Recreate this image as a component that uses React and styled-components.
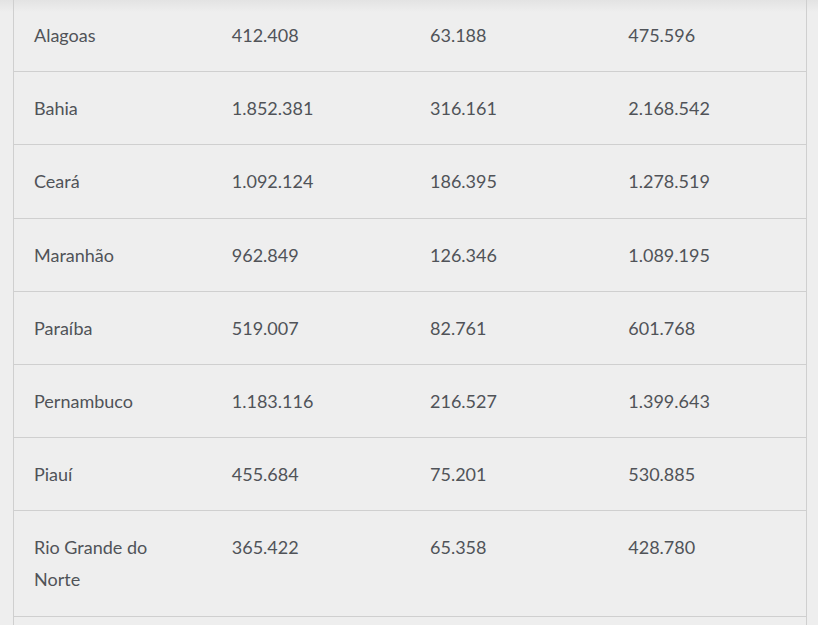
import React from 'react';
import styled, { createGlobalStyle } from 'styled-components';

const GlobalStyle = createGlobalStyle`
  body {
    margin: 0;
    background: linear-gradient(to bottom, #e3e3e3 0, #eeeeee 12px, #eeeeee 100%);
    font-family: "Lato", "Open Sans", sans-serif;
  }
`;

const Page = styled.div`
  padding: 0 0 0 13px;
  height: 625px;
  overflow: hidden;
`;

const Table = styled.table`
  width: 794px;
  margin-top: -2px;
  border-collapse: collapse;
  table-layout: fixed;
  border-left: 1px solid #cfcfcf;
  border-right: 1px solid #cfcfcf;
`;

const Row = styled.tr`
  border-top: 1px solid #cfcfcf;
  border-bottom: 1px solid #cfcfcf;
`;

const Cell = styled.td`
  padding: 20.1px 20px;
  vertical-align: top;
  font-size: 18px;
  line-height: 32px;
  color: #505358;
`;

const rows = [
  ['Alagoas', '412.408', '63.188', '475.596'],
  ['Bahia', '1.852.381', '316.161', '2.168.542'],
  ['Ceará', '1.092.124', '186.395', '1.278.519'],
  ['Maranhão', '962.849', '126.346', '1.089.195'],
  ['Paraíba', '519.007', '82.761', '601.768'],
  ['Pernambuco', '1.183.116', '216.527', '1.399.643'],
  ['Piauí', '455.684', '75.201', '530.885'],
  ['Rio Grande do Norte', '365.422', '65.358', '428.780'],
  ['', '', '', ''],
];

const App = () => (
  <Page>
    <GlobalStyle />
    <Table>
      <tbody>
        {rows.map((r, n) => (
          <Row key={n}>
            {r.map((c, i) => (
              <Cell key={i}>{c}</Cell>
            ))}
          </Row>
        ))}
      </tbody>
    </Table>
  </Page>
);

export default App;
